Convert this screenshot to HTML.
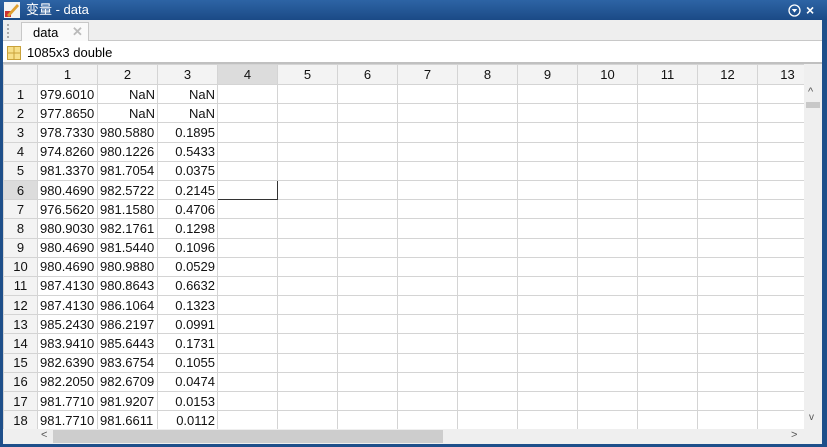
<!DOCTYPE html>
<html><head><meta charset="utf-8"><style>
*{margin:0;padding:0;box-sizing:border-box}
body{width:827px;height:447px;overflow:hidden;background:#1e4f8a;font-family:"Liberation Sans","Noto Sans CJK SC",sans-serif;position:relative}
#title{position:absolute;left:0;top:0;width:827px;height:20px;background:linear-gradient(#2d64a5,#1b4a86);color:#fff;font-size:13px;line-height:20px}
#tabbar{position:absolute;left:3px;top:20px;width:819px;height:21px;background:#eeeeee;border-bottom:1px solid #c8c8c8}
#tab{position:absolute;left:18px;top:2px;width:68px;height:20px;background:#fafafa;border:1px solid #c8c8c8;border-bottom:none;font-size:13px}
#info{position:absolute;left:3px;top:41px;width:819px;height:23px;background:#fff;font-size:13px;line-height:23px;border-bottom:2px solid #c0c0c0}
#grid{position:absolute;left:3px;top:64px;width:801px;height:365px;background:#fff;overflow:hidden}
table{border-collapse:collapse;table-layout:fixed;font-size:13px;color:#111}
td{border:1px solid #d4d4d4;height:19.2px;padding:0 2px;white-space:nowrap;overflow:hidden}
tr.h td{background:#f3f3f3;text-align:center;height:20px}
td.r{background:#f3f3f3;text-align:center}
td.n{text-align:right}
#vs{position:absolute;left:804px;top:64px;width:18px;height:365px;background:#efefef}
#hs{position:absolute;left:3px;top:429px;width:819px;height:15px;background:#efefef}
</style></head><body>
<div id="title">
<svg style="position:absolute;left:4px;top:2px" width="16" height="16"><rect x="0" y="0" width="16" height="16" fill="#f4f4f4"/><rect x="1" y="9" width="6" height="6" fill="#c33"/><path d="M3 13 L13 2 L15 4 L5 15Z" fill="#e0a030"/></svg>
<span style="position:absolute;left:26px;top:0">变量 - data</span>
<svg style="position:absolute;left:788px;top:4px" width="13" height="13"><circle cx="6.5" cy="6.5" r="5.5" fill="none" stroke="#fff" stroke-width="1.3"/><path d="M3.8 5 L9.2 5 L6.5 8.5Z" fill="#fff"/></svg>
<span style="position:absolute;left:806px;top:0;font-weight:bold;font-size:14px">×</span>
</div>
<div id="tabbar">
<div style="position:absolute;left:4px;top:4px;width:2px;height:14px;border-left:2px dotted #aaa"></div>
<div id="tab"><span style="position:absolute;left:11px;top:2px">data</span><span style="position:absolute;left:50px;top:1px;color:#bbb;font-size:13px;font-weight:bold">✕</span></div>
</div>
<div id="info">
<svg style="position:absolute;left:4px;top:5px" width="14" height="14"><rect x="0.5" y="0.5" width="13" height="13" fill="#f7e08a" stroke="#c9a23a"/><path d="M7 0.5V13.5M0.5 7H13.5" stroke="#c9a23a"/></svg>
<span style="position:absolute;left:24px;top:0">1085x3 double</span>
</div>
<div id="grid"><table style="width:814px">
<colgroup><col style="width:34px"><col style="width:60px"><col style="width:60px"><col style="width:60px"><col style="width:60px"><col style="width:60px"><col style="width:60px"><col style="width:60px"><col style="width:60px"><col style="width:60px"><col style="width:60px"><col style="width:60px"><col style="width:60px"><col style="width:60px"></colgroup>
<tr class="h"><td></td><td>1</td><td>2</td><td>3</td><td style="background:#dcdcdc">4</td><td>5</td><td>6</td><td>7</td><td>8</td><td>9</td><td>10</td><td>11</td><td>12</td><td>13</td></tr>
<tr><td class="r">1</td><td>979.6010</td><td class="n">NaN</td><td class="n">NaN</td><td></td><td></td><td></td><td></td><td></td><td></td><td></td><td></td><td></td><td></td></tr>
<tr><td class="r">2</td><td>977.8650</td><td class="n">NaN</td><td class="n">NaN</td><td></td><td></td><td></td><td></td><td></td><td></td><td></td><td></td><td></td><td></td></tr>
<tr><td class="r">3</td><td>978.7330</td><td>980.5880</td><td class="n">0.1895</td><td></td><td></td><td></td><td></td><td></td><td></td><td></td><td></td><td></td><td></td></tr>
<tr><td class="r">4</td><td>974.8260</td><td>980.1226</td><td class="n">0.5433</td><td></td><td></td><td></td><td></td><td></td><td></td><td></td><td></td><td></td><td></td></tr>
<tr><td class="r">5</td><td>981.3370</td><td>981.7054</td><td class="n">0.0375</td><td></td><td></td><td></td><td></td><td></td><td></td><td></td><td></td><td></td><td></td></tr>
<tr><td class="r" style="background:#dcdcdc">6</td><td>980.4690</td><td>982.5722</td><td class="n">0.2145</td><td style="border:1px solid #333"></td><td></td><td></td><td></td><td></td><td></td><td></td><td></td><td></td><td></td></tr>
<tr><td class="r">7</td><td>976.5620</td><td>981.1580</td><td class="n">0.4706</td><td></td><td></td><td></td><td></td><td></td><td></td><td></td><td></td><td></td><td></td></tr>
<tr><td class="r">8</td><td>980.9030</td><td>982.1761</td><td class="n">0.1298</td><td></td><td></td><td></td><td></td><td></td><td></td><td></td><td></td><td></td><td></td></tr>
<tr><td class="r">9</td><td>980.4690</td><td>981.5440</td><td class="n">0.1096</td><td></td><td></td><td></td><td></td><td></td><td></td><td></td><td></td><td></td><td></td></tr>
<tr><td class="r">10</td><td>980.4690</td><td>980.9880</td><td class="n">0.0529</td><td></td><td></td><td></td><td></td><td></td><td></td><td></td><td></td><td></td><td></td></tr>
<tr><td class="r">11</td><td>987.4130</td><td>980.8643</td><td class="n">0.6632</td><td></td><td></td><td></td><td></td><td></td><td></td><td></td><td></td><td></td><td></td></tr>
<tr><td class="r">12</td><td>987.4130</td><td>986.1064</td><td class="n">0.1323</td><td></td><td></td><td></td><td></td><td></td><td></td><td></td><td></td><td></td><td></td></tr>
<tr><td class="r">13</td><td>985.2430</td><td>986.2197</td><td class="n">0.0991</td><td></td><td></td><td></td><td></td><td></td><td></td><td></td><td></td><td></td><td></td></tr>
<tr><td class="r">14</td><td>983.9410</td><td>985.6443</td><td class="n">0.1731</td><td></td><td></td><td></td><td></td><td></td><td></td><td></td><td></td><td></td><td></td></tr>
<tr><td class="r">15</td><td>982.6390</td><td>983.6754</td><td class="n">0.1055</td><td></td><td></td><td></td><td></td><td></td><td></td><td></td><td></td><td></td><td></td></tr>
<tr><td class="r">16</td><td>982.2050</td><td>982.6709</td><td class="n">0.0474</td><td></td><td></td><td></td><td></td><td></td><td></td><td></td><td></td><td></td><td></td></tr>
<tr><td class="r">17</td><td>981.7710</td><td>981.9207</td><td class="n">0.0153</td><td></td><td></td><td></td><td></td><td></td><td></td><td></td><td></td><td></td><td></td></tr>
<tr><td class="r">18</td><td>981.7710</td><td>981.6611</td><td class="n">0.0112</td><td></td><td></td><td></td><td></td><td></td><td></td><td></td><td></td><td></td><td></td></tr>
</table></div>
<div id="vs">
<span style="position:absolute;left:4px;top:22px;font-size:11px;color:#555">^</span>
<div style="position:absolute;left:2px;top:38px;width:14px;height:6px;background:#c8c8c8"></div>
<span style="position:absolute;left:5px;top:348px;font-size:10px;color:#555">v</span>
</div>
<div id="hs">
<span style="position:absolute;left:38px;top:0;font-size:11px;color:#555">&lt;</span>
<div style="position:absolute;left:50px;top:1px;width:390px;height:13px;background:#cdcdcd"></div>
<span style="position:absolute;left:788px;top:0;font-size:11px;color:#555">&gt;</span>
</div>
</body></html>
